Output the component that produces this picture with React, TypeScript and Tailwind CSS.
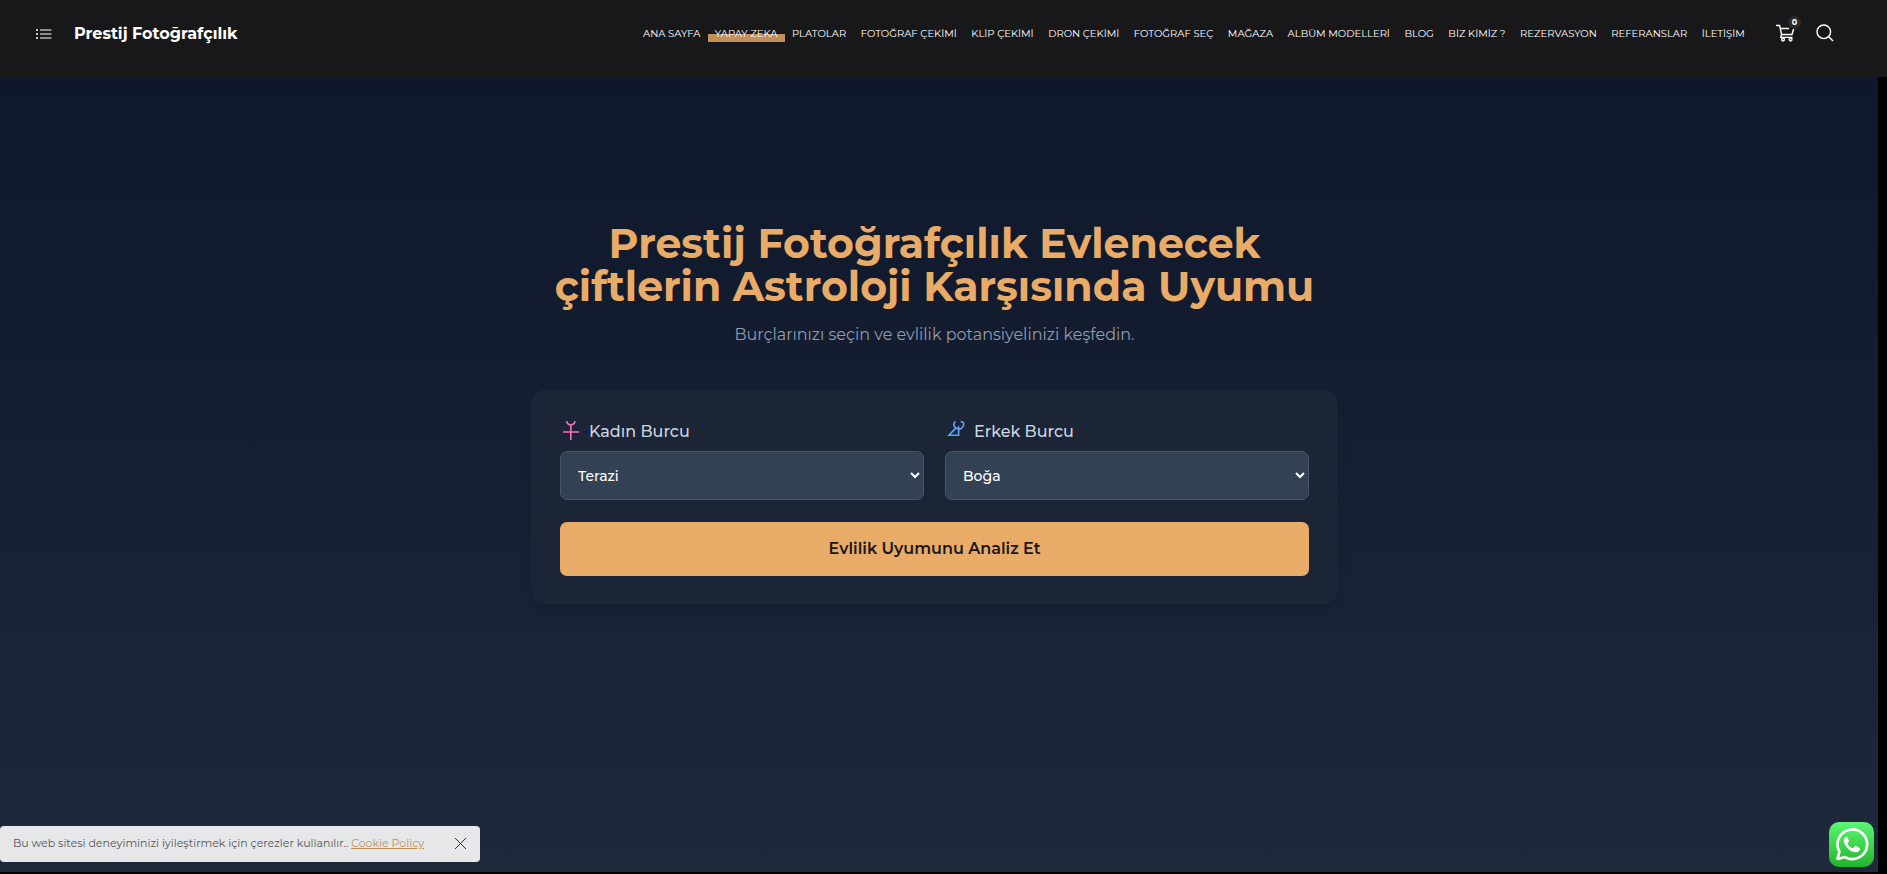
import { useState } from 'react';

const NAV_ITEMS = [
  'ANA SAYFA',
  'YAPAY ZEKA',
  'PLATOLAR',
  'FOTOĞRAF ÇEKİMİ',
  'KLİP ÇEKİMİ',
  'DRON ÇEKİMİ',
  'FOTOĞRAF SEÇ',
  'MAĞAZA',
  'ALBÜM MODELLERİ',
  'BLOG',
  'BİZ KİMİZ ?',
  'REZERVASYON',
  'REFERANSLAR',
  'İLETİŞİM',
];

const SIGNS = [
  'Koç',
  'Boğa',
  'İkizler',
  'Yengeç',
  'Aslan',
  'Başak',
  'Terazi',
  'Akrep',
  'Yay',
  'Oğlak',
  'Kova',
  'Balık',
];

function Header() {
  return (
    <header className="flex h-[77px] items-start justify-between bg-[#18181b] pl-9 pr-[53px] text-white">
      <div className="flex h-[67px] items-center">
        <button type="button" aria-label="Menü">
          <svg width="16" height="10" viewBox="0 0 16 10" fill="none" stroke="currentColor" strokeWidth="1">
            <path d="M4 1H15.5M4 5H15.5M4 9H15.5" />
            <path d="M0 1H2M0 5H2M0 9H2" strokeWidth="1.4" />
          </svg>
        </button>
        <a href="#" className="ml-[22px] text-[16px] font-bold whitespace-nowrap">
          Prestij Fotoğrafçılık
        </a>
      </div>

      <div className="flex h-[67px] items-center">
        <nav className="flex w-[1116px] justify-between">
          {NAV_ITEMS.map((item) => (
            <a
              key={item}
              href="#"
              className={`px-[7px] text-[10px] leading-4 whitespace-nowrap ${
                item === 'YAPAY ZEKA' ? 'bg-linear-to-b from-transparent from-50% to-[#c1905a] to-50%' : ''
              }`}
            >
              {item}
            </a>
          ))}
        </nav>
        <div className="ml-6 flex items-center gap-[21px] pb-[2px]">
          <button type="button" aria-label="Sepet" className="relative">
            <svg width="19" height="18" viewBox="0 0 19 18" fill="none" stroke="currentColor" strokeWidth="1.4">
              <path d="M0 1.5H3.6L5.6 10.5H16L17.6 5M4.2 4.5H13M5.6 10.5L4.8 13.4H16.5" />
              <circle cx="7" cy="15.6" r="1.4" />
              <circle cx="14.6" cy="15.6" r="1.4" />
            </svg>
            <span className="absolute -top-2 left-3 flex size-[13px] items-center justify-center rounded-full bg-[#2a2a2c] text-[8px] font-bold">
              0
            </span>
          </button>
          <button type="button" aria-label="Ara">
            <svg width="18" height="18" viewBox="0 0 18 18" fill="none" stroke="currentColor" strokeWidth="1.4">
              <circle cx="7.8" cy="7.8" r="6.8" />
              <path d="M12.7 12.7L17 17" />
            </svg>
          </button>
        </div>
      </div>
    </header>
  );
}

function FemaleIcon() {
  return (
    <svg width="22" height="22" viewBox="0 0 22 22" fill="none" stroke="#f472b6" strokeWidth="1.6">
      <path d="M6.8 0C6.8 2.4 8.6 3.8 10.8 3.8S14.8 2.4 14.8 0M10.8 3.8V19M3 11H19" />
    </svg>
  );
}

function MaleIcon() {
  return (
    <svg width="22" height="22" viewBox="0 0 22 22" fill="none" stroke="#60a5fa" strokeWidth="1.6">
      <path d="M10.5 0.5C8.2 1.8 8 5.4 11 6.9L14 8.5M15.5 0.5C18.4 0.5 19.2 2.8 18.3 5C17.5 6.8 16 8 14 8.4" />
      <path d="M11 6.9L4 14.2H13.6V5.2" />
    </svg>
  );
}

interface SignSelectProps {
  id: string;
  label: string;
  icon: React.ReactNode;
  value: string;
  onChange: (value: string) => void;
}

function SignSelect({ id, label, icon, value, onChange }: SignSelectProps) {
  return (
    <div>
      <label htmlFor={id} className="mb-[7px] flex h-6 items-center gap-[7px] text-[16px] font-medium text-[#cbd5e1]">
        {icon}
        {label}
      </label>
      <select
        id={id}
        value={value}
        onChange={(e) => onChange(e.target.value)}
        className="h-[49px] w-full rounded-[7px] border border-[#475569] bg-[#334155] px-[13px] text-[14px] font-medium text-white"
      >
        {SIGNS.map((sign) => (
          <option key={sign}>{sign}</option>
        ))}
      </select>
    </div>
  );
}

function CookieBar({ onClose }: { onClose: () => void }) {
  return (
    <div className="fixed bottom-3 left-0 flex h-9 w-[480px] items-center justify-between rounded bg-[#e6e7e9] px-[13px] pb-[2px] text-[11px] leading-4 text-[#555]">
      <p>
        Bu web sitesi deneyiminizi iyileştirmek için çerezler kullanılır..{' '}
        <a href="#" className="text-[#c1905a] underline">
          Cookie Policy
        </a>
      </p>
      <button type="button" aria-label="Kapat" onClick={onClose}>
        <svg width="13" height="13" viewBox="0 0 13 13" fill="none" stroke="#333" strokeWidth="1">
          <path d="M1 1L12 12M12 1L1 12" />
        </svg>
      </button>
    </div>
  );
}

function WhatsAppLink() {
  return (
    <a href="#" aria-label="WhatsApp" className="fixed right-[13px] bottom-[7px]">
      <svg width="45" height="45" viewBox="0 0 45 45" fill="none">
        <defs>
          <linearGradient id="wa" x1="0" y1="0" x2="0" y2="1">
            <stop offset="0" stopColor="#5bf675" />
            <stop offset="1" stopColor="#22b52b" />
          </linearGradient>
        </defs>
        <rect width="45" height="45" rx="10" fill="url(#wa)" />
        <path
          d="M8.4 37L10.5 29.6A14.8 14.8 0 1 1 16 35.1Z"
          stroke="#fff"
          strokeWidth="2.6"
          strokeLinejoin="round"
        />
        <path
          d="M17.6 14.7C16.9 14.7 14.8 16 14.8 18.8C14.8 21.6 17.2 24.5 18 25.4C20.2 28.2 23 29.6 26.2 30.3C28.5 30.5 30.9 29 31 27.2C31.1 26.3 30.9 26 30.4 25.7L27 24.1C26.4 23.9 26 24 25.6 24.5L24.3 26C24 26.4 23.6 26.4 23 26.1C21.2 25.3 19.6 23.9 18.7 22.1C18.4 21.6 18.5 21.3 18.9 20.9C19.7 20 20.1 19.5 19.8 18.8L18.7 15.6C18.4 14.9 18.1 14.7 17.6 14.7Z"
          fill="#fff"
        />
      </svg>
    </a>
  );
}

export default function App() {
  const [female, setFemale] = useState('Terazi');
  const [male, setMale] = useState('Boğa');
  const [cookieOpen, setCookieOpen] = useState(true);

  return (
    <div className="flex min-h-screen flex-col bg-black pb-[2px] font-[Montserrat,Inter,sans-serif]">
      <Header />
      <main className="mr-[9px] flex-1 bg-linear-to-b from-[#0f172a] to-[#1e293b] pt-[145px] pr-[9px]">
        <div className="mx-auto w-full max-w-[807px]">
          <h1 className="text-center text-[41px] leading-[43px] font-bold text-[#e9ab68]">
            Prestij Fotoğrafçılık Evlenecek
            <br />
            çiftlerin Astroloji Karşısında Uyumu
          </h1>
          <p className="mt-[15px] text-center text-[16px] leading-6 text-[#8f9bb0]">
            Burçlarınızı seçin ve evlilik potansiyelinizi keşfedin.
          </p>

          <form
            className="mt-[43px] rounded-[14px] bg-[#1b2536] px-[29px] pt-[30px] pb-7 shadow-lg"
            onSubmit={(e) => e.preventDefault()}
          >
            <div className="grid grid-cols-2 gap-[21px]">
              <SignSelect
                id="female-sign"
                label="Kadın Burcu"
                icon={<FemaleIcon />}
                value={female}
                onChange={setFemale}
              />
              <SignSelect
                id="male-sign"
                label="Erkek Burcu"
                icon={<MaleIcon />}
                value={male}
                onChange={setMale}
              />
            </div>
            <button
              type="submit"
              className="mt-[22px] h-[54px] w-full rounded-[7px] bg-[#e9ab68] text-[16px] font-semibold text-[#18181b]"
            >
              Evlilik Uyumunu Analiz Et
            </button>
          </form>
        </div>
      </main>

      {cookieOpen && <CookieBar onClose={() => setCookieOpen(false)} />}
      <WhatsAppLink />
    </div>
  );
}
